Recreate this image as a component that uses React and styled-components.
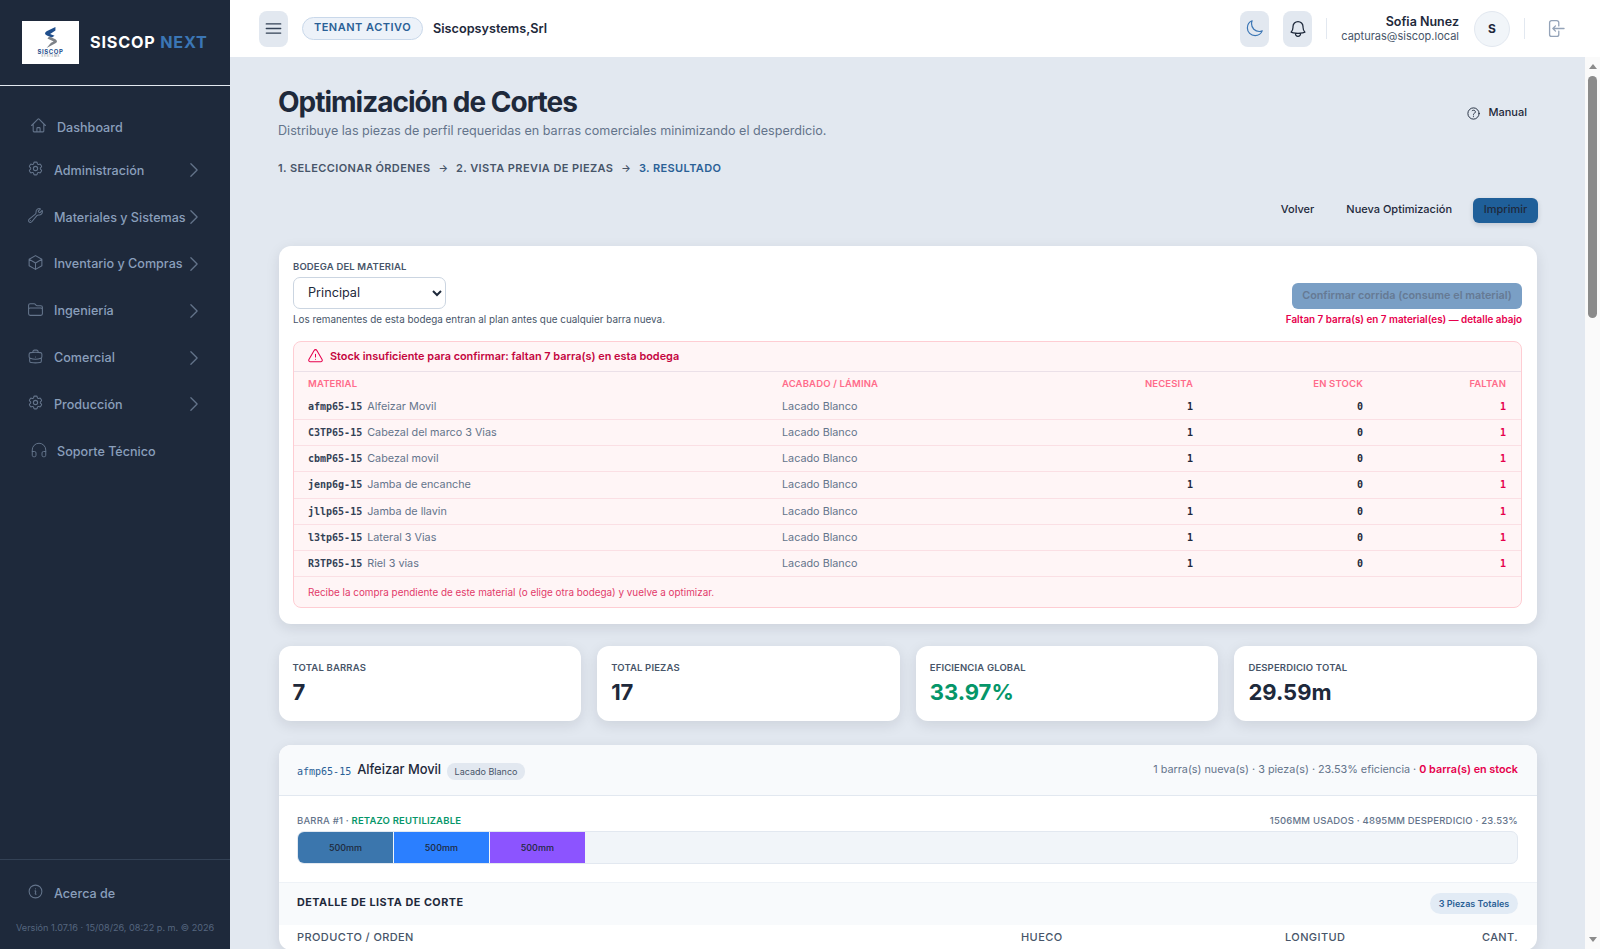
import styled, { createGlobalStyle } from "styled-components";
import { Headphones } from "lucide-react";
import {
  HiOutlineHome,
  HiOutlineCog6Tooth,
  HiOutlineWrench,
  HiOutlineCube,
  HiOutlineFolder,
  HiOutlineBriefcase,
  HiOutlineChevronRight,
  HiOutlineInformationCircle,
  HiOutlineBars3,
  HiOutlineMoon,
  HiOutlineBell,
  HiOutlineArrowLeftEndOnRectangle,
  HiOutlineQuestionMarkCircle,
  HiOutlineExclamationTriangle,
} from "react-icons/hi2";

const MONO = `"DejaVu Sans Mono", "Liberation Mono", monospace`;
const DANGER = "#e6004c";

const GlobalStyle = createGlobalStyle`
  html, body, #root { margin: 0; height: 100%; overflow: hidden; }
  body { font-family: Inter, "Noto Sans", sans-serif; color: #1e293b; background: #e2e8f0; }
  * { box-sizing: border-box; }
`;

const Shell = styled.div`
  display: flex;
  height: 100vh;
`;

const Sidebar = styled.aside`
  flex: 0 0 230px;
  display: flex;
  flex-direction: column;
  background: #1e293b;
`;

const Brand = styled.div`
  height: 86px;
  flex: none;
  display: flex;
  align-items: center;
  gap: 11px;
  padding: 0 0 1px 22px;
  border-bottom: 1px solid #e2e8f0;
`;

const LogoBox = styled.div`
  width: 57px;
  height: 43px;
  background: #fff;
  display: flex;
  flex-direction: column;
  align-items: center;
  justify-content: center;
  color: #1f4e8c;
  font-size: 6px;
  font-weight: 700;
  line-height: 6px;
  letter-spacing: 0.6px;
`;

const LogoSub = styled.span`
  color: #8d9299;
  font-size: 3px;
  line-height: 3px;
  font-weight: 500;
  letter-spacing: 0.6px;
`;

const BrandName = styled.div`
  color: #fff;
  font-size: 16.2px;
  font-weight: 700;
  letter-spacing: 0.8px;
  span { color: #3b76b5; }
`;

const Nav = styled.nav`
  padding-top: 21px;
  flex: 1;
`;

const NavRow = styled.div`
  display: flex;
  align-items: center;
  height: ${(p) => (p.$short ? "40px" : "46.8px")};
  padding: 0 29px 0 ${(p) => (p.$inset ? "30px" : "27px")};
  color: #8a9fbb;
  font-size: 12.6px;
  font-weight: 500;
  white-space: nowrap;
  svg { flex: none; }
`;

const NavIcon = styled.span`
  display: flex;
  width: 27px;
  margin-top: -3px;
  color: #64748b;
`;

const NavChevron = styled.span`
  display: flex;
  justify-content: center;
  width: 14px;
  margin-left: auto;
  color: #64748b;
  svg { margin: 0 -3px; }
`;

const SideFooter = styled.div`
  border-top: 1px solid #334155;
  height: 90px;
  flex: none;
  padding-top: 10px;
`;

const Version = styled.div`
  margin-top: 5px;
  padding-left: 16px;
  font-size: 9.15px;
  color: #55667f;
  white-space: nowrap;
`;

const Column = styled.div`
  flex: 1;
  min-width: 0;
  display: flex;
  flex-direction: column;
`;

const Topbar = styled.header`
  height: 57px;
  flex: none;
  background: #fff;
  display: flex;
  align-items: center;
  padding: 0 34px 0 29px;
`;

const IconButton = styled.button`
  width: 29px;
  height: 36px;
  padding: 0;
  border: 0;
  border-radius: 8px;
  background: #e2e8f0;
  display: flex;
  align-items: center;
  justify-content: center;
  color: ${(p) => p.$color || "#334155"};
`;

const TenantPill = styled.span`
  margin-left: 14px;
  width: 121px;
  height: 23px;
  padding-bottom: 3px;
  border: 1px solid #c9d8ea;
  border-radius: 12px;
  background: #edf2f9;
  color: #2a6096;
  font-size: 11px;
  font-weight: 600;
  letter-spacing: 0.5px;
  display: flex;
  align-items: center;
  justify-content: center;
`;

const TenantName = styled.span`
  margin-left: 10px;
  font-size: 12.7px;
  font-weight: 600;
  color: #1e293b;
`;

const TopRight = styled.div`
  margin-left: auto;
  display: flex;
  align-items: center;
  gap: 14px;
`;

const VRule = styled.span`
  width: 1px;
  height: 21px;
  background: #e2e8f0;
`;

const User = styled.div`
  text-align: right;
  line-height: 15px;
  margin-right: 1px;
`;

const UserName = styled.div`
  font-size: 12.5px;
  font-weight: 600;
`;

const UserMail = styled.div`
  font-size: 11px;
  color: #475569;
`;

const Avatar = styled.div`
  width: 36px;
  height: 36px;
  border-radius: 50%;
  background: #f1f5f9;
  border: 1px solid #e2e8f0;
  display: flex;
  align-items: center;
  justify-content: center;
  font-size: 12px;
  font-weight: 700;
`;

const LogoutIcon = styled.span`
  display: flex;
  margin-left: 6px;
  color: #94a3b8;
`;

const Body = styled.div`
  flex: 1;
  min-height: 0;
  display: flex;
`;

const Main = styled.main`
  flex: 1;
  min-width: 0;
  overflow: hidden;
`;

const ScrollRail = styled.div`
  flex: 0 0 15px;
  display: flex;
  flex-direction: column;
  align-items: center;
  padding: 7px 0;
  background: #fafafa;
`;

const ScrollArrow = styled.span`
  width: 0;
  height: 0;
  border-left: 4px solid transparent;
  border-right: 4px solid transparent;
  border-${(p) => (p.$down ? "top" : "bottom")}: 5px solid #8b8b8b;
  margin-top: ${(p) => (p.$down ? "auto" : "0")};
`;

const ScrollThumb = styled.span`
  width: 9px;
  height: 242px;
  margin-top: 7px;
  border-radius: 5px;
  background: #8b8b8b;
`;

const Content = styled.div`
  padding: 27px 48px 24px 49px;
`;

const PageHead = styled.div`
  display: flex;
  justify-content: space-between;
  align-items: flex-start;
  margin-left: -1px;
`;

const Title = styled.h1`
  margin: 0;
  font-size: 28px;
  line-height: 36px;
  font-weight: 700;
  letter-spacing: -1px;
`;

const Subtitle = styled.p`
  margin: 1px 0 0;
  font-size: 12.6px;
  line-height: 20px;
  color: #64748b;
`;

const ManualLink = styled.div`
  display: flex;
  align-items: center;
  gap: 7px;
  margin: 19px 10px 0 0;
  font-size: 11px;
  font-weight: 500;
  line-height: 18px;
  svg { margin-top: 2px; }
`;

const Steps = styled.div`
  margin: 19px 0 0 -1px;
  display: flex;
  gap: 7.75px;
  font-size: 11px;
  font-weight: 600;
  line-height: 16px;
  letter-spacing: 0.4px;
  color: #475569;
`;

const Step = styled.span`
  color: ${(p) => (p.$active ? "#2a6096" : "#475569")};
`;

const StepArrow = styled.span`
  font-size: 10px;
`;

const Actions = styled.div`
  margin: 22px -1px 0 0;
  display: flex;
  justify-content: flex-end;
  align-items: center;
`;

const GhostButton = styled.span`
  margin-right: ${(p) => p.$gap};
  padding-bottom: 3px;
  font-size: 11px;
  font-weight: 500;
  color: #1e293b;
`;

const PrintButton = styled.span`
  width: 65px;
  height: 25px;
  padding-bottom: 3px;
  border-radius: 6px;
  background: #1f5f99;
  color: #1e293b;
  font-size: 11px;
  font-weight: 500;
  display: flex;
  align-items: center;
  justify-content: center;
  box-shadow: 0 2px 5px rgba(15, 23, 42, 0.15);
`;

const Card = styled.section`
  margin-top: ${(p) => p.$top || "0"};
  background: #fff;
  border-radius: 12px;
  box-shadow: 0 4px 14px rgba(15, 23, 42, 0.1);
  overflow: hidden;
`;

const WarehouseCard = styled(Card)`
  padding: 15px 15px 16px 14px;
`;

const WarehouseRow = styled.div`
  display: flex;
  justify-content: space-between;
`;

const FieldLabel = styled.div`
  font-size: 9.5px;
  font-weight: 600;
  line-height: 12px;
  letter-spacing: 0.15px;
  color: #475569;
`;

const WarehouseSelect = styled.select`
  display: block;
  margin-top: 4px;
  width: 153px;
  height: 32px;
  padding: 0 6px 1px 10px;
  border: 1px solid #cbd5e1;
  border-radius: 7px;
  background: #fff;
  color: #1e293b;
  font-family: inherit;
  font-size: 12.7px;
`;

const Hint = styled.div`
  margin-top: 4px;
  font-size: 9.9px;
  line-height: 12px;
  color: #475569;
`;

const ConfirmBox = styled.div`
  padding-top: 22px;
  display: flex;
  flex-direction: column;
  align-items: flex-end;
`;

const ConfirmButton = styled.span`
  width: 230px;
  height: 26px;
  padding-bottom: 2px;
  border-radius: 6px;
  background: #7a9fc5;
  color: #667a94;
  font-size: 10.85px;
  font-weight: 600;
  display: flex;
  align-items: center;
  justify-content: center;
`;

const ConfirmNote = styled.div`
  margin-top: 4px;
  font-size: 9.9px;
  font-weight: 600;
  line-height: 12px;
  color: ${DANGER};
`;

const Alert = styled.div`
  margin-top: 16px;
  border: 1px solid #fecdd3;
  border-radius: 8px;
  background: #fff5f6;
  overflow: hidden;
`;

const AlertHead = styled.div`
  height: 30px;
  display: flex;
  align-items: center;
  gap: 6px;
  padding: 0 0 1px 13px;
  border-bottom: 1px solid #ebe0e8;
  color: #c4063f;
  font-size: 10.9px;
  font-weight: 600;
  svg { color: ${DANGER}; }
`;

const MaterialGrid = styled.div`
  display: grid;
  grid-template-columns: 474px 200px 211px 170px 1fr;
  align-items: center;
  height: ${(p) => (p.$head ? "22px" : "26.15px")};
  padding: 0 15px 0 14px;
  border-bottom: ${(p) => (p.$head ? "0" : "1px solid #fbdfe4")};
`;

const HeadCell = styled.div`
  font-size: 9.5px;
  font-weight: 600;
  letter-spacing: 0.15px;
  color: #ff6b8a;
  text-align: ${(p) => (p.$right ? "right" : "left")};
`;

const Code = styled.span`
  font-family: ${MONO};
  font-size: 10px;
  font-weight: 700;
  color: #334155;
  margin-right: 5px;
`;

const BodyCell = styled.div`
  font-size: 10.8px;
  color: #64748b;
`;

const Qty = styled.div`
  font-family: ${MONO};
  font-size: 10px;
  font-weight: ${(p) => (p.$danger ? 700 : 600)};
  color: ${(p) => (p.$danger ? DANGER : "#1e293b")};
  text-align: right;
`;

const AlertFoot = styled.div`
  height: 30px;
  display: flex;
  align-items: center;
  padding-left: 14px;
  font-size: 9.9px;
  color: #e23a6a;
`;

const StatGrid = styled.div`
  margin: 22px 0 0 -0.5px;
  display: grid;
  grid-template-columns: repeat(4, 1fr);
  gap: 16px;
`;

const StatCard = styled(Card)`
  height: 75px;
  padding: 16px 15px 0 14px;
`;

const StatLabel = styled.div`
  font-size: 9.5px;
  font-weight: 600;
  line-height: 12px;
  letter-spacing: 0.15px;
  color: #475569;
`;

const StatValue = styled.div`
  margin-top: 3px;
  font-size: 22px;
  line-height: 30px;
  font-weight: 700;
  color: ${(p) => p.$color || "#1e293b"};
`;

const MaterialHead = styled.div`
  height: 51px;
  display: flex;
  align-items: center;
  padding: 0 19px 0 18px;
  background: #f8fafc;
  border-bottom: 1px solid #e2e8f0;
`;

const HeadCode = styled.span`
  font-family: ${MONO};
  font-size: 10px;
  color: #2a6096;
  margin: 3px 6px 0 0;
`;

const HeadName = styled.span`
  font-size: 12.9px;
  font-weight: 500;
  color: #1e293b;
`;

const FinishChip = styled.span`
  margin: 3px 0 0 6px;
  padding: 0 7.5px;
  height: 17px;
  border-radius: 8px;
  background: #e2e8f0;
  font-size: 9px;
  color: #475569;
  display: flex;
  align-items: center;
`;

const HeadStats = styled.div`
  margin: 0 0 1px auto;
  font-size: 10.8px;
  color: #64748b;
  b { font-weight: 600; color: ${DANGER}; }
`;

const BarSection = styled.div`
  padding: 19px 19px 18px 18px;
  border-bottom: 1px solid #eef2f7;
`;

const BarMeta = styled.div`
  display: flex;
  justify-content: space-between;
  font-size: 9.5px;
  line-height: 12px;
  font-weight: 500;
  letter-spacing: 0.18px;
  color: #64748b;
  b { font-weight: 600; color: #059669; }
`;

const Bar = styled.div`
  margin-top: 4px;
  height: 33px;
  display: flex;
  background: #f1f5f9;
  border: 1px solid #e2e8f0;
  border-radius: 7px;
  overflow: hidden;
`;

const Segment = styled.div`
  width: 7.87%;
  background: ${(p) => p.$color};
  border-right: 1px solid #f1f5f9;
  color: #1e293b;
  font-size: 9px;
  font-weight: 500;
  display: flex;
  align-items: center;
  justify-content: center;
`;

const DetailHead = styled.div`
  height: 42px;
  display: flex;
  align-items: center;
  justify-content: space-between;
  padding: 0 19px 0 18px;
  background: #f8fafc;
`;

const DetailTitle = styled.div`
  margin-bottom: 3px;
  font-size: 10.8px;
  font-weight: 700;
  letter-spacing: 0.5px;
`;

const TotalChip = styled.span`
  height: 21px;
  width: 88px;
  border-radius: 11px;
  background: #e2ebf5;
  color: #2a6096;
  font-size: 9px;
  font-weight: 600;
  display: flex;
  align-items: center;
  justify-content: center;
`;

const CutHead = styled.div`
  display: grid;
  grid-template-columns: 724px 264px 100px 1fr;
  height: 25px;
  align-items: center;
  padding: 0 19px 0 18px;
  font-size: 11px;
  font-weight: 500;
  letter-spacing: 0.4px;
  color: #475569;
  span:last-child { text-align: right; }
`;

const materials = [
  ["afmp65-15", "Alfeizar Movil"],
  ["C3TP65-15", "Cabezal del marco 3 Vias"],
  ["cbmP65-15", "Cabezal movil"],
  ["jenp6g-15", "Jamba de encanche"],
  ["jllp65-15", "Jamba de llavin"],
  ["l3tp65-15", "Lateral 3 Vias"],
  ["R3TP65-15", "Riel 3 vias"],
];

const navItems = [
  [HiOutlineCog6Tooth, "Administración"],
  [HiOutlineWrench, "Materiales y Sistemas"],
  [HiOutlineCube, "Inventario y Compras"],
  [HiOutlineFolder, "Ingeniería"],
  [HiOutlineBriefcase, "Comercial"],
  [HiOutlineCog6Tooth, "Producción"],
];

const stats = [
  ["TOTAL BARRAS", "7"],
  ["TOTAL PIEZAS", "17"],
  ["EFICIENCIA GLOBAL", "33.97%", "#059669"],
  ["DESPERDICIO TOTAL", "29.59m"],
];

function Logo() {
  return (
    <LogoBox>
      <svg width="18" height="23" viewBox="0 0 20 26">
        <path d="M15 1 L5 6 Q1 9 6 11 L11 13 L14 11 L9 9 L15 5 Z" fill="#1f4e8c" />
        <path d="M8 12 L15 15 Q19 18 14 20 L5 25 L10 19 L13 17.5 L6 14 Z" fill="#7d8288" />
      </svg>
      SISCOP
      <LogoSub>SYSTEMS</LogoSub>
    </LogoBox>
  );
}

export default function App() {
  return (
    <Shell>
      <GlobalStyle />
      <Sidebar>
        <Brand>
          <Logo />
          <BrandName>
            SISCOP <span>NEXT</span>
          </BrandName>
        </Brand>
        <Nav>
          <NavRow $short $inset>
            <NavIcon><HiOutlineHome size={17} /></NavIcon>
            Dashboard
          </NavRow>
          {navItems.map(([Icon, label]) => (
            <NavRow key={label}>
              <NavIcon><Icon size={17} /></NavIcon>
              {label}
              <NavChevron><HiOutlineChevronRight size={20} /></NavChevron>
            </NavRow>
          ))}
          <NavRow $inset>
            <NavIcon><Headphones size={18} strokeWidth={1.3} /></NavIcon>
            Soporte Técnico
          </NavRow>
        </Nav>
        <SideFooter>
          <NavRow>
            <NavIcon><HiOutlineInformationCircle size={17} /></NavIcon>
            Acerca de
          </NavRow>
          <Version>Versión 1.07.16 · 15/08/26, 08:22 p. m. © 2026</Version>
        </SideFooter>
      </Sidebar>

      <Column>
        <Topbar>
          <IconButton><HiOutlineBars3 size={21} /></IconButton>
          <TenantPill>TENANT ACTIVO</TenantPill>
          <TenantName>Siscopsystems,Srl</TenantName>
          <TopRight>
            <IconButton $color="#3b76b5"><HiOutlineMoon size={19} /></IconButton>
            <IconButton $color="#1e293b"><HiOutlineBell size={20} /></IconButton>
            <VRule />
            <User>
              <UserName>Sofia Nunez</UserName>
              <UserMail>capturas@siscop.local</UserMail>
            </User>
            <Avatar>S</Avatar>
            <VRule />
            <LogoutIcon><HiOutlineArrowLeftEndOnRectangle size={21} /></LogoutIcon>
          </TopRight>
        </Topbar>

        <Body>
          <Main>
            <Content>
              <PageHead>
                <div>
                  <Title>Optimización de Cortes</Title>
                  <Subtitle>
                    Distribuye las piezas de perfil requeridas en barras comerciales minimizando el desperdicio.
                  </Subtitle>
                </div>
                <ManualLink>
                  <HiOutlineQuestionMarkCircle size={15} />
                  Manual
                </ManualLink>
              </PageHead>

              <Steps>
                <Step>1. SELECCIONAR ÓRDENES</Step>
                <StepArrow>→</StepArrow>
                <Step>2. VISTA PREVIA DE PIEZAS</Step>
                <StepArrow>→</StepArrow>
                <Step $active>3. RESULTADO</Step>
              </Steps>

              <Actions>
                <GhostButton $gap="32px">Volver</GhostButton>
                <GhostButton $gap="21px">Nueva Optimización</GhostButton>
                <PrintButton>Imprimir</PrintButton>
              </Actions>

              <WarehouseCard $top="23px">
                <WarehouseRow>
                  <div>
                    <FieldLabel>BODEGA DEL MATERIAL</FieldLabel>
                    <WarehouseSelect defaultValue="Principal">
                      <option>Principal</option>
                    </WarehouseSelect>
                    <Hint>Los remanentes de esta bodega entran al plan antes que cualquier barra nueva.</Hint>
                  </div>
                  <ConfirmBox>
                    <ConfirmButton>Confirmar corrida (consume el material)</ConfirmButton>
                    <ConfirmNote>Faltan 7 barra(s) en 7 material(es) — detalle abajo</ConfirmNote>
                  </ConfirmBox>
                </WarehouseRow>

                <Alert>
                  <AlertHead>
                    <HiOutlineExclamationTriangle size={17} />
                    Stock insuficiente para confirmar: faltan 7 barra(s) en esta bodega
                  </AlertHead>
                  <MaterialGrid $head>
                    <HeadCell>MATERIAL</HeadCell>
                    <HeadCell>ACABADO / LÁMINA</HeadCell>
                    <HeadCell $right>NECESITA</HeadCell>
                    <HeadCell $right>EN STOCK</HeadCell>
                    <HeadCell $right>FALTAN</HeadCell>
                  </MaterialGrid>
                  {materials.map(([code, name]) => (
                    <MaterialGrid key={code}>
                      <BodyCell><Code>{code}</Code>{name}</BodyCell>
                      <BodyCell>Lacado Blanco</BodyCell>
                      <Qty>1</Qty>
                      <Qty>0</Qty>
                      <Qty $danger>1</Qty>
                    </MaterialGrid>
                  ))}
                  <AlertFoot>
                    Recibe la compra pendiente de este material (o elige otra bodega) y vuelve a optimizar.
                  </AlertFoot>
                </Alert>
              </WarehouseCard>

              <StatGrid>
                {stats.map(([label, value, color]) => (
                  <StatCard key={label}>
                    <StatLabel>{label}</StatLabel>
                    <StatValue $color={color}>{value}</StatValue>
                  </StatCard>
                ))}
              </StatGrid>

              <Card $top="24px">
                <MaterialHead>
                  <HeadCode>afmp65-15</HeadCode>
                  <HeadName>Alfeizar Movil</HeadName>
                  <FinishChip>Lacado Blanco</FinishChip>
                  <HeadStats>
                    1 barra(s) nueva(s) · 3 pieza(s) · 23.53% eficiencia · <b>0 barra(s) en stock</b>
                  </HeadStats>
                </MaterialHead>
                <BarSection>
                  <BarMeta>
                    <span>BARRA #1 · <b>RETAZO REUTILIZABLE</b></span>
                    <span>1506MM USADOS · 4895MM DESPERDICIO · 23.53%</span>
                  </BarMeta>
                  <Bar>
                    <Segment $color="#3b76ad">500mm</Segment>
                    <Segment $color="#2b7fff">500mm</Segment>
                    <Segment $color="#8c54ff">500mm</Segment>
                  </Bar>
                </BarSection>
                <DetailHead>
                  <DetailTitle>DETALLE DE LISTA DE CORTE</DetailTitle>
                  <TotalChip>3 Piezas Totales</TotalChip>
                </DetailHead>
                <CutHead>
                  <span>PRODUCTO / ORDEN</span>
                  <span>HUECO</span>
                  <span>LONGITUD</span>
                  <span>CANT.</span>
                </CutHead>
              </Card>
            </Content>
          </Main>
          <ScrollRail>
            <ScrollArrow />
            <ScrollThumb />
            <ScrollArrow $down />
          </ScrollRail>
        </Body>
      </Column>
    </Shell>
  );
}
